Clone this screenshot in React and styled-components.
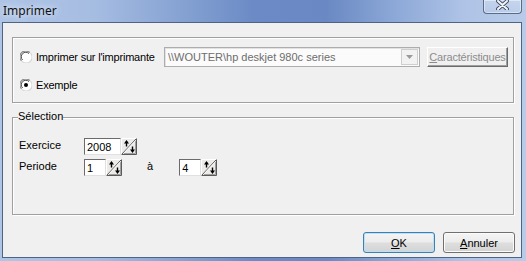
import React from "react";
import styled, { createGlobalStyle } from "styled-components";

const GlobalStyle = createGlobalStyle`
  html, body {
    margin: 0;
    padding: 0;
  }
  body {
    width: 526px;
    height: 261px;
    overflow: hidden;
    font-family: "Liberation Sans", Arial, sans-serif;
    font-size: 11px;
    color: #000;
  }
`;

function Radio({ checked }) {
  return (
    <svg width="12" height="12" viewBox="0 0 12 12">
      <circle cx="6" cy="6" r="5.5" fill="#fff" />
      <path d="M1.6 9.9 A5.5 5.5 0 0 1 9.9 1.6" stroke="#8c8c8c" strokeWidth="1.1" fill="none" />
      <path d="M2.6 9 A4.3 4.3 0 0 1 9 2.6" stroke="#4a4a4a" strokeWidth="1" fill="none" />
      <path d="M10.4 2.1 A5.5 5.5 0 0 1 2.1 10.4" stroke="#d8d8d8" strokeWidth="1.1" fill="none" />
      {checked && <circle cx="6" cy="6" r="2" fill="#000" />}
    </svg>
  );
}

function SpinGlyph() {
  return (
    <svg width="16" height="17" viewBox="0 0 16 17">
      <rect x="0" y="0" width="16" height="17" fill="#ecebea" />
      <path d="M0.5 16.5 V0.5 H15.5" stroke="#fff" fill="none" />
      <path d="M0.5 16.5 H15.5 V0.5" stroke="#5a5a5a" fill="none" />
      <path d="M1.5 15.5 H14.5 V1.5" stroke="#a0a0a0" fill="none" />
      <path d="M1 16 L15 1" stroke="#555" strokeWidth="1" />
      <path d="M2 16 L15 2" stroke="#fff" strokeWidth="0.8" />
      <path d="M5.5 3.5 V8.5" stroke="#000" strokeWidth="1.4" />
      <path d="M3 5.5 L5.5 2 L8 5.5 Z" fill="#000" />
      <path d="M11.5 8.5 V13" stroke="#000" strokeWidth="1.4" />
      <path d="M9 11.5 L11.5 15 L14 11.5 Z" fill="#000" />
    </svg>
  );
}

function CloseGlyph() {
  return (
    <svg width="13" height="10" viewBox="0 0 13 10">
      <path d="M2 1 L11 9 M11 1 L2 9" stroke="#3c4b63" strokeWidth="3.8" strokeLinecap="round" />
      <path d="M2 1 L11 9 M11 1 L2 9" stroke="#f4f6fa" strokeWidth="2" strokeLinecap="round" />
    </svg>
  );
}

function ComboArrow() {
  return (
    <svg width="7" height="4" viewBox="0 0 7 4">
      <path d="M0 0 H7 L3.5 4 Z" fill="#9a9a9a" />
    </svg>
  );
}

function Spinner({ value, fieldWidth }) {
  return (
    <SpinBox>
      <Field $width={fieldWidth}>{value}</Field>
      <SpinButton>
        <SpinGlyph />
      </SpinButton>
    </SpinBox>
  );
}

export default function App() {
  return (
    <>
      <GlobalStyle />
      <Window>
        <TitleBar>
          <Title>Imprimer</Title>
          <CloseButton>
            <CloseGlyph />
          </CloseButton>
        </TitleBar>
        <Client>
          <GroupBox $height={66}>
            <PrinterRow>
              <RadioLabel $width={144}>
                <Radio />
                <span>Imprimer sur l'imprimante</span>
              </RadioLabel>
              <Combo>
                <ComboText>\\WOUTER\hp deskjet 980c series</ComboText>
                <ComboButton>
                  <ComboArrow />
                </ComboButton>
              </Combo>
              <ClassicButton>
                <u>C</u>aractéristiques
              </ClassicButton>
            </PrinterRow>
            <ExampleRow>
              <RadioLabel>
                <Radio checked />
                <span>Exemple</span>
              </RadioLabel>
            </ExampleRow>
          </GroupBox>
          <GroupBox $height={98} $gap={14}>
            <Caption>Sélection</Caption>
            <FormRow $first>
              <FieldLabel>Exercice</FieldLabel>
              <Spinner value="2008" fieldWidth={37} />
            </FormRow>
            <FormRow>
              <FieldLabel>Periode</FieldLabel>
              <Spinner value="1" fieldWidth={22} />
              <RangeWord>à</RangeWord>
              <Spinner value="4" fieldWidth={22} />
            </FormRow>
          </GroupBox>
          <ButtonRow>
            <DialogButton $default>
              <u>O</u>K
            </DialogButton>
            <DialogButton>
              <u>A</u>nnuler
            </DialogButton>
          </ButtonRow>
        </Client>
      </Window>
    </>
  );
}

const Window = styled.div`
  width: 526px;
  height: 261px;
  box-sizing: border-box;
  display: flex;
  flex-direction: column;
  padding: 0 4px 3px 2px;
  background: linear-gradient(
    90deg,
    #afc5e6 0%,
    #a6bde2 18%,
    #87a3d3 34%,
    #6c8bc6 48%,
    #6a88c3 62%,
    #8aa6d6 74%,
    #aec3e6 88%,
    #b8cbe9 100%
  );
`;

const TitleBar = styled.div`
  height: 22px;
  flex: none;
  display: flex;
  align-items: flex-start;
  justify-content: space-between;
`;

const Title = styled.span`
  font-family: "Noto Sans", "Open Sans", sans-serif;
  font-size: 12px;
  line-height: 22px;
  margin-left: 1px;
  color: #101010;
  text-shadow: 0 0 6px rgba(235, 242, 252, 0.9), 0 0 10px rgba(235, 242, 252, 0.7);
`;

const CloseButton = styled.div`
  width: 39px;
  height: 14px;
  box-sizing: border-box;
  display: flex;
  justify-content: center;
  align-items: flex-start;
  border: 1px solid #5a6b86;
  border-top: none;
  border-radius: 0 0 4px 4px;
  background: linear-gradient(rgba(255, 255, 255, 0.22), rgba(255, 255, 255, 0.06));
  box-shadow: inset 0 0 0 1px rgba(255, 255, 255, 0.45);
`;

const Client = styled.div`
  flex: 1;
  display: flex;
  flex-direction: column;
  border: 1px solid #4f6385;
  background: #f0f0f0;
  padding: 14px 7px 4px 9px;
`;

const GroupBox = styled.div`
  height: ${(p) => p.$height}px;
  margin-top: ${(p) => p.$gap || 0}px;
  box-sizing: border-box;
  display: flex;
  flex-direction: column;
  border: 1px solid #a0a0a0;
  box-shadow: inset 1px 1px 0 #fff, 1px 1px 0 #fff;
`;

const Caption = styled.span`
  align-self: flex-start;
  margin: -8px 0 0 5px;
  line-height: 13px;
  background: #f0f0f0;
`;

const PrinterRow = styled.div`
  display: flex;
  align-items: center;
  height: 20px;
  margin: 9px 0 0 7px;
`;

const ExampleRow = styled.div`
  display: flex;
  align-items: center;
  height: 16px;
  margin: 10px 0 0 7px;
`;

const RadioLabel = styled.label`
  display: flex;
  align-items: center;
  gap: 4px;
  width: ${(p) => (p.$width ? `${p.$width}px` : "auto")};
  letter-spacing: -0.2px;
  svg {
    flex: none;
  }
`;

const Combo = styled.div`
  width: 256px;
  height: 20px;
  box-sizing: border-box;
  display: flex;
  align-items: center;
  border: 1px solid #adadad;
  background: #fbfbfb;
  box-shadow: inset 1px 1px 0 #e2e2e2;
`;

const ComboText = styled.span`
  flex: 1;
  padding-left: 3px;
  color: #6d6d6d;
  white-space: nowrap;
`;

const ComboButton = styled.div`
  width: 17px;
  height: 16px;
  margin-right: 1px;
  box-sizing: border-box;
  display: flex;
  align-items: center;
  justify-content: center;
  border: 1px solid #cfcfcf;
  background: #f2f2f2;
`;

const ClassicButton = styled.div`
  width: 81px;
  height: 20px;
  margin-left: 7px;
  box-sizing: border-box;
  display: flex;
  align-items: center;
  justify-content: center;
  border: 1px solid;
  border-color: #fff #6a6a6a #6a6a6a #fff;
  box-shadow: inset -1px -1px 0 #a0a0a0;
  background: #f0f0f0;
  color: #8c8c8c;
  letter-spacing: -0.2px;
  white-space: nowrap;
`;

const FormRow = styled.div`
  display: flex;
  align-items: center;
  height: 17px;
  margin: ${(p) => (p.$first ? "15px" : "4px")} 0 0 6px;
`;

const FieldLabel = styled.span`
  width: 65px;
  margin-top: -4px;
`;

const RangeWord = styled.span`
  margin: -4px 26px 0 25px;
`;

const SpinBox = styled.div`
  display: flex;
  height: 17px;
`;

const Field = styled.div`
  width: ${(p) => p.$width}px;
  height: 17px;
  box-sizing: border-box;
  padding-left: 2px;
  display: flex;
  align-items: center;
  background: #fff;
  border: 1px solid;
  border-color: #6b6b6b #e0e0e0 #e0e0e0 #6b6b6b;
`;

const SpinButton = styled.div`
  width: 16px;
  height: 17px;
  display: flex;
`;

const ButtonRow = styled.div`
  margin-top: auto;
  margin-right: -1px;
  display: flex;
  justify-content: flex-end;
  gap: 8px;
`;

const DialogButton = styled.div`
  width: 72px;
  height: 21px;
  box-sizing: border-box;
  display: flex;
  align-items: center;
  justify-content: center;
  border: 1px solid ${(p) => (p.$default ? "#3c7fb1" : "#707070")};
  border-radius: 3px;
  background: linear-gradient(#f4f4f4 0%, #ececec 48%, #dedede 52%, #d3d3d3 100%);
  box-shadow: inset 0 0 0 1px ${(p) => (p.$default ? "#b9e1f8" : "#fbfbfb")};
`;
